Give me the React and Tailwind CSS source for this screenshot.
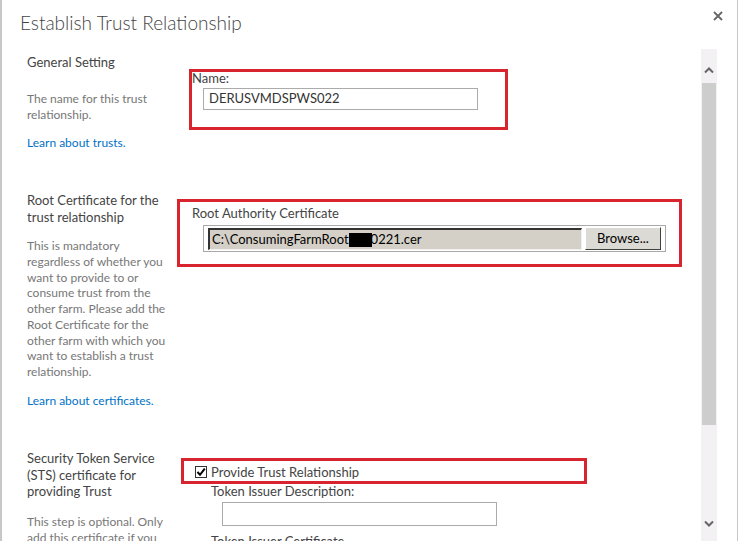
import React from 'react';

const FONT = { fontFamily: 'Lato, "Open Sans", sans-serif' };

const CloseIcon = () => (
  <svg width="10" height="10" viewBox="0 0 10 10" className="block">
    <path d="M1 1 L9 9 M9 1 L1 9" stroke="#666" strokeWidth="1.8" fill="none" />
  </svg>
);

const Chevron = ({ down }) => (
  <svg width="10" height="7" viewBox="0 0 10 7" className="block">
    <polyline
      points={down ? '1,1.5 5,5.5 9,1.5' : '1,5.5 5,1.5 9,5.5'}
      stroke="#666"
      strokeWidth="2"
      fill="none"
    />
  </svg>
);

const CheckBox = () => (
  <svg width="12" height="12" viewBox="0 0 12 12" className="block shrink-0">
    <rect x="0.5" y="0.5" width="11" height="11" fill="#fff" stroke="#333" />
    <polyline points="2.5,6 5,8.8 9.8,2.6" stroke="#000" strokeWidth="2" fill="none" />
  </svg>
);

const Section = ({ className, left, right }) => (
  <div className={`flex ${className}`}>
    <div className="w-[165px] shrink-0 whitespace-nowrap">{left}</div>
    <div className="flex-1">{right}</div>
  </div>
);

const Heading = ({ children }) => (
  <div className="text-[13px] leading-[16.5px] text-[#444]">{children}</div>
);

const Desc = ({ className = '', children }) => (
  <div className={`text-[12px] leading-[15.75px] text-[#777] ${className}`}>{children}</div>
);

const LearnLink = ({ className = '', children }) => (
  <div className={`text-[12px] leading-[15.75px] text-[#0072c6] ${className}`}>{children}</div>
);

const Label = ({ className = '', children }) => (
  <div className={`text-[13px] leading-[16.5px] text-[#444] ${className}`}>{children}</div>
);

const Annotation = ({ className }) => (
  <div className={`absolute border-[3px] border-[#d8242e] pointer-events-none ${className}`} />
);

export default function App() {
  return (
    <div className="w-[738px] h-[541px] overflow-hidden bg-white border-l-2 border-r border-[#c8c8c8]" style={FONT}>
      <div className="relative h-full flex flex-col">
        {/* header */}
        <div className="h-[49px] shrink-0 flex justify-between items-start">
          <h1 className="pl-[18px] pt-[10px] text-[19px] leading-[25px] font-light text-[#444]">
            Establish Trust Relationship
          </h1>
          <button className="mt-[11px] mr-[14px]">
            <CloseIcon />
          </button>
        </div>

        <div className="flex flex-1 min-h-0">
          <div className="flex-1 pl-[25px] overflow-hidden">
            <Section
              className="mt-[5px]"
              left={
                <>
                  <Heading>General Setting</Heading>
                  <Desc className="mt-[20.5px]">
                    The name for this trust
                    <br />
                    relationship.
                  </Desc>
                  <LearnLink className="mt-[12.5px]">Learn about trusts.</LearnLink>
                </>
              }
              right={
                <>
                  <Label className="mt-[16px]">Name:</Label>
                  <div className="mt-[1.5px] ml-[11px] w-[275px] h-[22px] border border-[#ababab] pl-[5px] flex items-center text-[13px] text-[#333]">
                    DERUSVMDSPWS022
                  </div>
                </>
              }
            />

            <Section
              className="mt-[41.25px]"
              left={
                <>
                  <Heading>
                    Root Certificate for the
                    <br />
                    trust relationship
                  </Heading>
                  <Desc className="mt-[13px]">
                    This is mandatory
                    <br />
                    regardless of whether you
                    <br />
                    want to provide to or
                    <br />
                    consume trust from the
                    <br />
                    other farm. Please add the
                    <br />
                    Root Certificate for the
                    <br />
                    other farm with which you
                    <br />
                    want to establish a trust
                    <br />
                    relationship.
                  </Desc>
                  <LearnLink className="mt-[13px]">Learn about certificates.</LearnLink>
                </>
              }
              right={
                <>
                  <Label className="mt-[13px]">Root Authority Certificate</Label>
                  <div className="mt-[3.5px] ml-[11px] w-[463px] h-[27px] border border-[#a9a9a9] flex items-start pl-[4px] pt-[2px] gap-[3px]">
                    <div className="w-[374px] h-[22px] bg-[#d4d0c8] border-t-2 border-l-2 border-t-[#333] border-l-[#333] border-b border-r border-b-[#f0f0f0] border-r-[#f0f0f0] pl-[2px] flex items-center text-[13px] text-black whitespace-nowrap overflow-hidden">
                      C:\ConsumingFarmRoot
                      <span className="inline-block w-[23px] h-[14px] bg-black" />
                      <span className="-ml-[1px]">0221.cer</span>
                    </div>
                    <button className="mt-[-1px] w-[76px] h-[23px] bg-[#dcdad5] border border-t-white border-l-white border-b-[#404040] border-r-[#404040] text-[13px] text-black leading-none">
                      Browse...
                    </button>
                  </div>
                </>
              }
            />

            <Section
              className="mt-[41.5px]"
              left={
                <>
                  <Heading>
                    Security Token Service
                    <br />
                    (STS) certificate for
                    <br />
                    providing Trust
                  </Heading>
                  <Desc className="mt-[14.5px]">
                    This step is optional. Only
                    <br />
                    add this certificate if you
                  </Desc>
                </>
              }
              right={
                <>
                  <div className="mt-[14px] flex items-center gap-[4px] pl-[3px]">
                    <CheckBox />
                    <Label>Provide Trust Relationship</Label>
                  </div>
                  <Label className="mt-[2.5px] pl-[19px]">Token Issuer Description:</Label>
                  <div className="mt-[2.5px] ml-[30px] w-[275px] h-[24px] border border-[#ababab]" />
                  <Label className="mt-[7px] pl-[19px]">Token Issuer Certificate</Label>
                </>
              }
            />
          </div>

          {/* scrollbar */}
          <div className="w-[16px] shrink-0 bg-[#f4f1f4] flex flex-col">
            <div className="h-[34px] pt-[18px] pl-[3px]">
              <Chevron />
            </div>
            <div className="h-[342px] mx-[1px] bg-[#cdcdcd]" />
            <div className="h-[95px]" />
            <div className="pl-[3px]">
              <Chevron down />
            </div>
          </div>
          <div className="w-[20px] shrink-0" />
        </div>

        {/* annotation boxes drawn over the form */}
        <Annotation className="left-[187px] top-[69px] w-[319px] h-[61px]" />
        <Annotation className="left-[175px] top-[199px] w-[505px] h-[68px]" />
        <Annotation className="left-[179px] top-[458px] w-[406px] h-[26px]" />
      </div>
    </div>
  );
}
